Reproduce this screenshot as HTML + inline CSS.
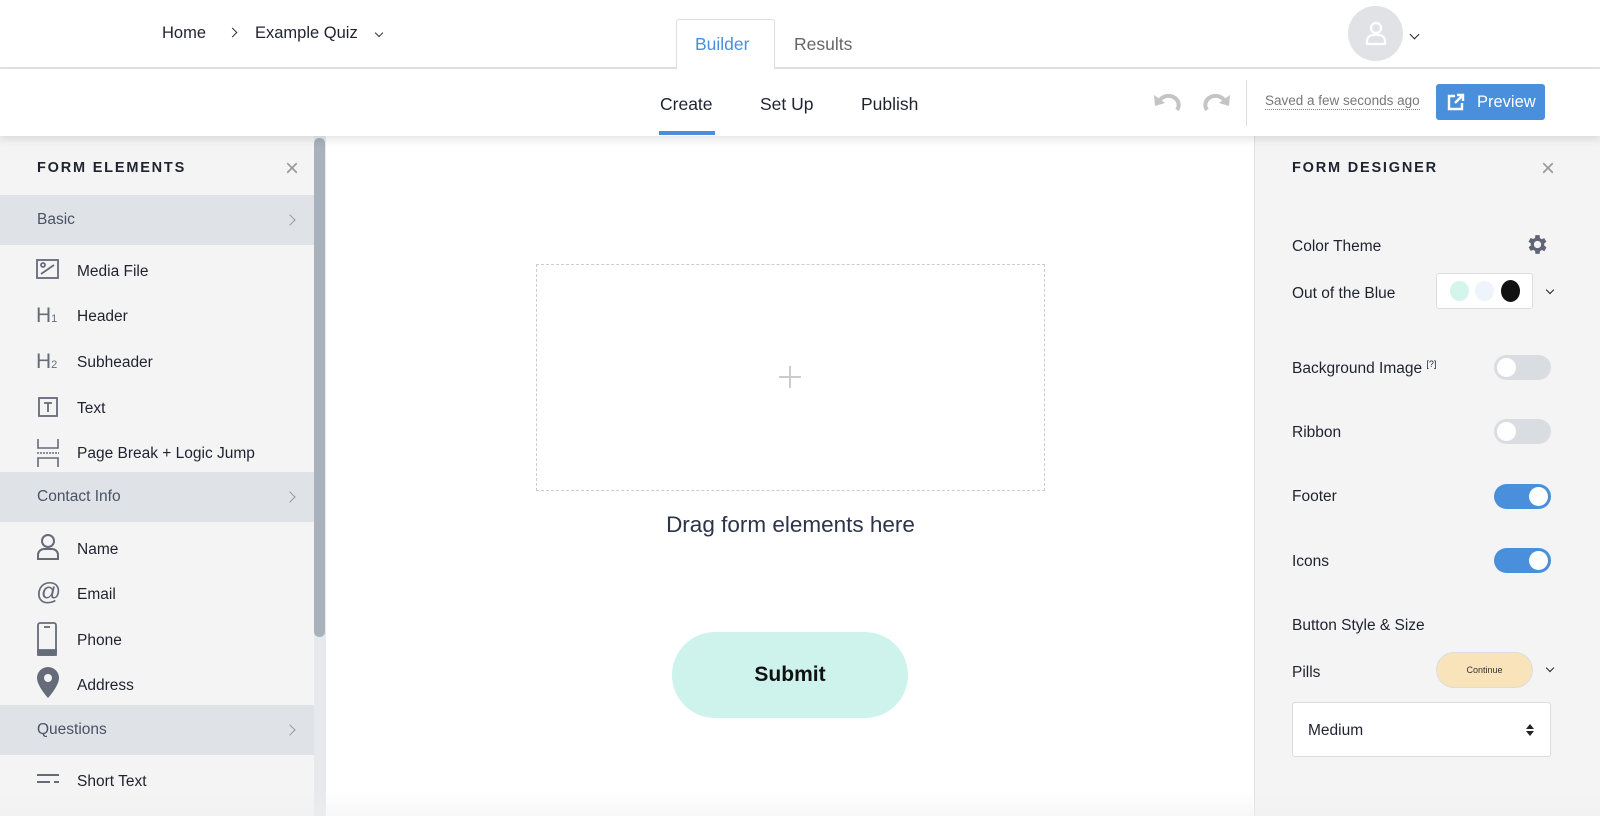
<!DOCTYPE html>
<html><head><meta charset="utf-8"><style>
*{box-sizing:border-box;margin:0;padding:0}
body{width:1600px;height:816px;overflow:hidden;font-family:"Liberation Sans",sans-serif;background:#fff;position:relative;color:#1f2330}
.a{position:absolute}
.t{font-size:16px}
.row{position:absolute;left:0;width:314px;height:50px;background:#dfe2e6;color:#4a5264;font-size:15.5px;padding:16px 0 0 37px}
.row:after{content:"";position:absolute;right:20px;top:21px;width:7px;height:7px;border-top:1px solid #999;border-right:1px solid #999;transform:rotate(45deg)}
.it{position:absolute;left:77px;font-size:15.5px;color:#1f2330;margin-top:2px}
.ic{position:absolute;left:36px}
.lab{position:absolute;left:1292px;font-size:15.5px;color:#1f2330;margin-top:2px}
.tg{position:absolute;left:1494px;width:57px;height:25px;border-radius:13px;background:#d9dde2}
.tg i{position:absolute;top:3px;left:3px;width:19px;height:19px;border-radius:50%;background:#fff}
.tg.on{background:#4a8fdb}.tg.on i{left:35px}
</style></head><body>
<!-- top bar -->
<div class="a t" style="left:162px;top:24px;font-size:16.5px">Home</div>
<div class="a" style="left:229px;top:29px;width:7px;height:7px;border-top:1.5px solid #333;border-right:1.5px solid #333;transform:rotate(45deg)"></div>
<div class="a t" style="left:255px;top:24px;font-size:16.5px">Example Quiz</div>
<div class="a" style="left:376px;top:30px;width:6px;height:6px;border-bottom:1.5px solid #333;border-right:1.5px solid #333;transform:rotate(45deg)"></div>
<div class="a" style="left:676px;top:19px;width:99px;height:50px;border:1px solid #ddd;border-bottom:none;border-radius:3px 3px 0 0;background:#fff;z-index:2"></div>
<div class="a t" style="left:695px;top:34px;color:#4a8fdb;font-size:17.5px;z-index:3">Builder</div>
<div class="a t" style="left:794px;top:34px;color:#666;font-size:17.5px">Results</div>
<div class="a" style="left:1348px;top:6px;width:55px;height:55px;border-radius:50%;background:#e0e2e5"></div>
<svg class="a" style="left:1362px;top:19px" width="28" height="28" viewBox="0 0 28 28" fill="none" stroke="#fff" stroke-width="2.2"><circle cx="14" cy="9" r="5"/><path d="M5 25v-3a6 6 0 0 1 6-6h6a6 6 0 0 1 6 6v3z"/></svg>
<div class="a" style="left:1411px;top:31px;width:7px;height:7px;border-bottom:1.8px solid #222;border-right:1.8px solid #222;transform:rotate(45deg)"></div>
<div class="a" style="left:0;top:67px;width:1600px;height:2px;background:#e2e2e2"></div>
<!-- second bar -->
<div class="a" style="left:0;top:69px;width:1600px;height:67px;background:#fff;box-shadow:0 4px 8px rgba(0,0,0,.1);z-index:1"></div>
<div class="a t" style="left:660px;top:94px;font-size:17.5px;z-index:2">Create</div>
<div class="a t" style="left:760px;top:94px;font-size:17.5px;z-index:2">Set Up</div>
<div class="a t" style="left:861px;top:94px;font-size:17.5px;z-index:2">Publish</div>
<div class="a" style="left:659px;top:131px;width:56px;height:4px;background:#4a8fdb;z-index:2"></div>
<svg class="a" style="left:1152px;top:92px;z-index:2" width="80" height="22" viewBox="0 0 80 22" fill="none" stroke="#c4c4c4" stroke-width="4"><path d="M8 8a10 9 0 0 1 17 10"/><path d="M2 3l1 11 10-3z" stroke-width="0" fill="#c4c4c4"/><path d="M72 8a10 9 0 0 0-17 10"/><path d="M78 3l-1 11-10-3z" stroke-width="0" fill="#c4c4c4"/></svg>
<div class="a" style="left:1246px;top:80px;width:1px;height:46px;background:#ddd;z-index:2"></div>
<div class="a" style="left:1265px;top:93px;font-size:13.5px;color:#777;border-bottom:1px dotted #888;padding-bottom:1px;z-index:2">Saved a few seconds ago</div>
<div class="a" style="left:1436px;top:84px;width:109px;height:36px;background:#4a8fdb;border-radius:3px;z-index:2;color:#fff;font-size:16.5px;padding:9px 0 0 41px">Preview</div>
<svg class="a" style="left:1447px;top:93px;z-index:3" width="18" height="18" viewBox="0 0 18 18" fill="none" stroke="#fff" stroke-width="2.4"><path d="M8 3H2v13h13v-6"/><path d="M8 10l8-8M10 2h6v6"/></svg>
<!-- left panel -->
<div class="a" style="left:0;top:136px;width:314px;height:680px;background:#f4f4f4"></div>
<div class="a" style="left:314px;top:136px;width:12px;height:680px;background:#e8e9ec"></div>
<div class="a" style="left:314px;top:138px;width:11px;height:499px;background:#a9b1bd;border-radius:5px"></div>
<div class="a" style="left:37px;top:160px;font-size:14.5px;font-weight:bold;letter-spacing:1.8px">FORM ELEMENTS</div>
<div class="a" style="left:285px;top:159px;font-size:24px;color:#999;line-height:20px">×</div>
<div class="row" style="top:195px">Basic</div>
<svg class="ic" style="top:259px" width="24" height="20" viewBox="0 0 24 20" fill="none" stroke="#666b7a" stroke-width="1.8"><rect x="1" y="1" width="21" height="18"/><circle cx="7" cy="6" r="2"/><path d="M5 15l13-9"/></svg>
<div class="it" style="top:261px">Media File</div>
<div class="ic" style="top:304px;font-size:21px;color:#666b7a">H<span style="font-size:11px">1</span></div>
<div class="it" style="top:306px">Header</div>
<div class="ic" style="top:350px;font-size:21px;color:#666b7a">H<span style="font-size:11px">2</span></div>
<div class="it" style="top:352px">Subheader</div>
<svg class="ic" style="top:395px" width="24" height="24" viewBox="0 0 24 24" fill="none" stroke="#666b7a" stroke-width="1.8"><rect x="3" y="3" width="18" height="18"/><path d="M8 8h8M12 8v9"/></svg>
<div class="it" style="top:398px">Text</div>
<svg class="ic" style="top:438px" width="24" height="30" viewBox="0 0 24 30" fill="none" stroke="#666b7a" stroke-width="1.6"><path d="M2 1v9h20V1M2 29v-9h20v9"/><path d="M1 15h22" stroke-dasharray="2 1"/></svg>
<div class="it" style="top:443px">Page Break + Logic Jump</div>
<div class="row" style="top:472px">Contact Info</div>
<svg class="ic" style="top:534px" width="24" height="26" viewBox="0 0 24 26" fill="none" stroke="#666b7a" stroke-width="2"><circle cx="12" cy="7" r="6"/><path d="M2 25v-4a6 6 0 0 1 6-6h8a6 6 0 0 1 6 6v4z"/></svg>
<div class="it" style="top:539px">Name</div>
<div class="ic" style="top:578px;font-size:25px;color:#666b7a">@</div>
<div class="it" style="top:584px">Email</div>
<svg class="ic" style="top:622px" width="24" height="34" viewBox="0 0 24 34" fill="none" stroke="#666b7a" stroke-width="1.8"><rect x="2" y="1" width="18" height="32" rx="2"/><path d="M8 5h6"/><path d="M2 28h18v5H2z" fill="#666b7a"/></svg>
<div class="it" style="top:630px">Phone</div>
<svg class="ic" style="top:667px" width="24" height="32" viewBox="0 0 24 32"><path d="M12 0a11 11 0 0 0-11 11c0 8 11 20 11 20s11-12 11-20A11 11 0 0 0 12 0z" fill="#666b7a"/><circle cx="12" cy="11" r="4" fill="#f4f4f4"/></svg>
<div class="it" style="top:675px">Address</div>
<div class="row" style="top:705px">Questions</div>
<svg class="ic" style="top:773px" width="24" height="12" viewBox="0 0 24 12" stroke="#666b7a" stroke-width="2"><path d="M1 2h22M1 9h13M18 9h5"/></svg>
<div class="it" style="top:771px">Short Text</div>
<!-- canvas -->
<div class="a" style="left:536px;top:264px;width:509px;height:227px;border:1px dashed #ccc"></div>
<div class="a" style="left:779px;top:366px;width:22px;height:22px"><div class="a" style="left:10px;top:0;width:2px;height:22px;background:#ccc"></div><div class="a" style="left:0;top:10px;width:22px;height:2px;background:#ccc"></div></div>
<div class="a" style="left:536px;top:512px;width:509px;text-align:center;font-size:22.5px;color:#2d3348">Drag form elements here</div>
<div class="a" style="left:672px;top:632px;width:236px;height:86px;border-radius:43px;background:#cdf3ec;text-align:center;font-weight:bold;font-size:21px;padding-top:31px;color:#111">Submit</div>
<!-- right panel -->
<div class="a" style="left:1254px;top:136px;width:346px;height:680px;background:#f4f4f4;border-left:1px solid #e0e0e0"></div>
<div class="a" style="left:1292px;top:160px;font-size:14.5px;font-weight:bold;letter-spacing:1.8px">FORM DESIGNER</div>
<div class="a" style="left:1541px;top:159px;font-size:24px;color:#999;line-height:20px">×</div>
<div class="lab" style="top:236px">Color Theme</div>
<svg class="a" style="left:1525px;top:232px" width="25" height="25" viewBox="0 0 24 24"><path fill="#5f6577" d="M19.4 13a7.5 7.5 0 0 0 0-2l2.1-1.6-2-3.5-2.5 1a7.6 7.6 0 0 0-1.7-1L15 3h-4l-.4 2.7a7.6 7.6 0 0 0-1.7 1l-2.5-1-2 3.5L6.6 11a7.5 7.5 0 0 0 0 2l-2.1 1.6 2 3.5 2.5-1a7.6 7.6 0 0 0 1.7 1L11 21h4l.4-2.7a7.6 7.6 0 0 0 1.7-1l2.5 1 2-3.5zM13 15.5a3.5 3.5 0 1 1 0-7 3.5 3.5 0 0 1 0 7z" transform="translate(-1 0)"/></svg>
<div class="lab" style="top:283px">Out of the Blue</div>
<div class="a" style="left:1436px;top:273px;width:97px;height:36px;background:#fff;border:1px solid #ddd;border-radius:3px"></div>
<div class="a" style="left:1450px;top:281px;width:19px;height:20px;border-radius:50%;background:#d3f5ec"></div>
<div class="a" style="left:1475px;top:281px;width:19px;height:20px;border-radius:50%;background:#eef4fb"></div>
<div class="a" style="left:1501px;top:280px;width:19px;height:22px;border-radius:50%;background:#111"></div>
<div class="a" style="left:1547px;top:287px;width:6px;height:6px;border-bottom:1.5px solid #222;border-right:1.5px solid #222;transform:rotate(45deg)"></div>
<div class="lab" style="top:357px">Background Image <sup style="font-size:9px">[?]</sup></div>
<div class="tg" style="top:355px"><i></i></div>
<div class="lab" style="top:422px">Ribbon</div>
<div class="tg" style="top:419px"><i></i></div>
<div class="lab" style="top:486px">Footer</div>
<div class="tg on" style="top:484px"><i></i></div>
<div class="lab" style="top:551px">Icons</div>
<div class="tg on" style="top:548px"><i></i></div>
<div class="lab" style="top:615px">Button Style &amp; Size</div>
<div class="lab" style="top:662px">Pills</div>
<div class="a" style="left:1436px;top:652px;width:97px;height:36px;border-radius:18px;background:#f8e3bb;border:1px solid #ddd;font-size:9px;text-align:center;padding-top:12px;color:#333">Continue</div>
<div class="a" style="left:1547px;top:665px;width:6px;height:6px;border-bottom:1.5px solid #222;border-right:1.5px solid #222;transform:rotate(45deg)"></div>
<div class="a" style="left:1292px;top:702px;width:259px;height:55px;background:#fff;border:1px solid #ddd;border-radius:3px;font-size:15.5px;padding:19px 0 0 15px">Medium</div>
<div class="a" style="left:1526px;top:724px;width:0;height:0;border:4px solid transparent;border-bottom:5px solid #222;border-top:none"></div>
<div class="a" style="left:1526px;top:731px;width:0;height:0;border:4px solid transparent;border-top:5px solid #222;border-bottom:none"></div>
<div class="a" style="left:0;top:790px;width:1600px;height:26px;background:linear-gradient(rgba(255,255,255,0),rgba(240,240,240,.5))"></div>
</body></html>
